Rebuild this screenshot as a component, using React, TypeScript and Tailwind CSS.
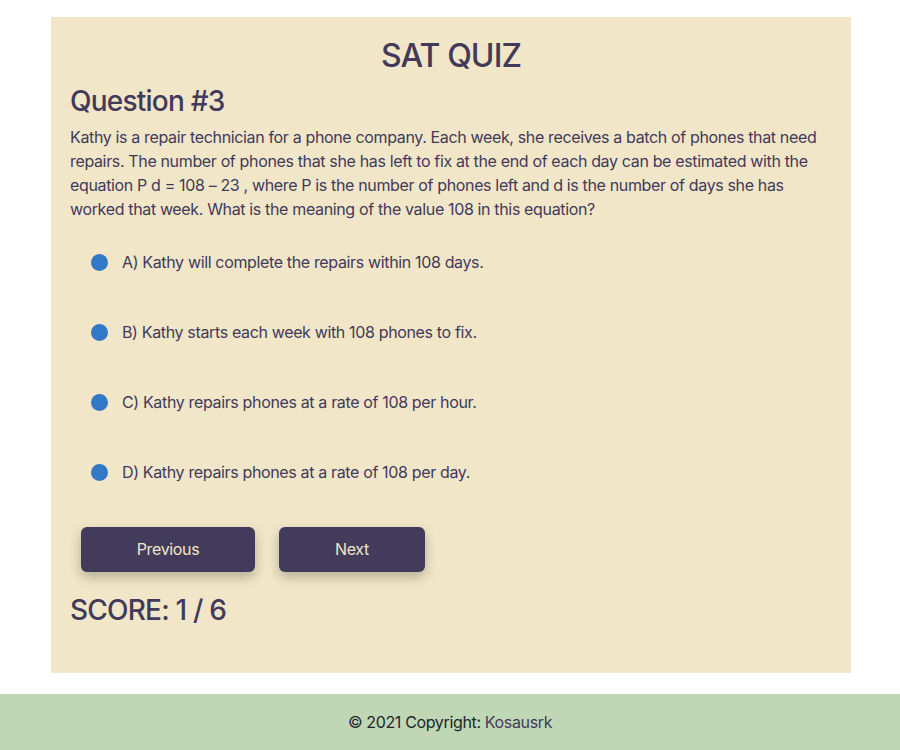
const options = [
  'A) Kathy will complete the repairs within 108 days.',
  'B) Kathy starts each week with 108 phones to fix.',
  'C) Kathy repairs phones at a rate of 108 per hour.',
  'D) Kathy repairs phones at a rate of 108 per day.',
]

export default function App() {
  return (
    <div className="min-h-screen bg-white font-['Inter','Liberation_Sans',sans-serif] text-[#413a5a] tracking-[-0.022em]">
      <div className="pt-[17px]">
        <div className="ml-[51px] w-[800px] bg-[#f1e6c8] px-[19px] pt-[20px] pb-[46px]">
          <h1 className="text-center text-[32px] leading-[38px] font-medium tracking-[-0.028em]">SAT QUIZ</h1>
          <h2 className="mt-[9px] mb-[7px] text-[28px] leading-[34px] font-medium tracking-[-0.028em]">Question #3</h2>
          <p className="text-[16px] leading-[24px]">
            Kathy is a repair technician for a phone company. Each week, she receives a batch of phones that need
            repairs. The number of phones that she has left to fix at the end of each day can be estimated with the
            equation P d = 108 – 23 , where P is the number of phones left and d is the number of days she has
            worked that week. What is the meaning of the value 108 in this equation?
          </p>
          <ul className="mt-[6px]">
            {options.map((o) => (
              <li key={o} className="flex h-[70px] items-center pl-[21px]">
                <span className="h-[17px] w-[17px] shrink-0 rounded-full bg-[#3179c6]" />
                <span className="ml-[14px] text-[16px] leading-[24px]">{o}</span>
              </li>
            ))}
          </ul>
          <div className="mt-[20px] flex gap-[24px] pl-[11px]">
            <button className="h-[45px] w-[174px] rounded-[6px] bg-[#433b5b] pb-[1px] text-[16px] leading-[24px] text-[#f1e6c8] shadow-[0_5px_12px_rgba(0,0,0,0.25)]">
              Previous
            </button>
            <button className="h-[45px] w-[146px] rounded-[6px] bg-[#433b5b] pb-[1px] text-[16px] leading-[24px] text-[#f1e6c8] shadow-[0_5px_12px_rgba(0,0,0,0.25)]">
              Next
            </button>
          </div>
          <h2 className="mt-[21px] text-[28px] leading-[34px] font-medium tracking-[-0.028em]">SCORE: 1 / 6</h2>
        </div>
      </div>
      <footer className="mt-[21px] bg-[#c0d7b5] py-[16px] text-center text-[16px] leading-[24px] text-[#212529]">
        © 2021 Copyright: <a className="text-[#413a5a]">Kosausrk</a>
      </footer>
    </div>
  )
}
